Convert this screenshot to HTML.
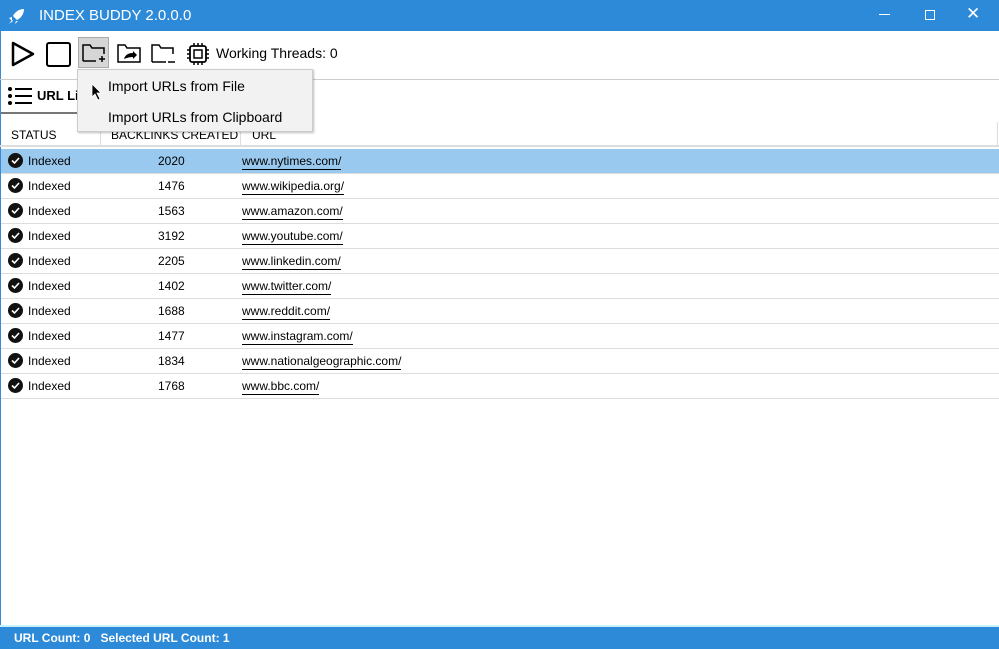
<!DOCTYPE html><html><head><style>
body{margin:0;width:999px;height:649px;position:relative;overflow:hidden;background:#fff;font-family:"Segoe UI","Liberation Sans",sans-serif;font-size:12px;color:#000}
.a{position:absolute}
.title{left:0;top:0;width:999px;height:31px;background:#2d8ad9;color:#fff;font-size:15px}
.row{position:absolute;left:1px;width:998px;height:24px;border-bottom:1px solid #ddd}
.row span{position:absolute;top:5px}
.u{border-bottom:1px solid #000;padding-bottom:1px}
.ck{left:7px;top:4px!important;width:15px;height:15px;border-radius:50%;background:#111}
</style></head><body>
<div class="a title">
<svg class="a" style="left:8px;top:7px" width="18" height="18" viewBox="0 0 18 18"><path d="M16 2C11 2 7 5 5 9l4 4c4-2 7-6 7-11z" fill="#fff"/><path d="M4 10l-3 1 3 3M8 14l-1 3 3-3M4 13l-3 4 4-3" fill="#fff"/></svg>
<span class="a" style="left:39px;top:7px">INDEX BUDDY 2.0.0.0</span>
<span class="a" style="left:879px;top:14px;width:11px;height:1px;background:#fff"></span>
<span class="a" style="left:925px;top:10px;width:8px;height:8px;border:1px solid #fff"></span>
<span class="a" style="left:966px;top:4px;font-size:17px">✕</span>
</div>
<div class="a" style="left:0;top:31px;width:1px;height:596px;background:#3a8ad8"></div>
<svg class="a" style="left:10px;top:41px" width="26" height="26"><path d="M3 2L23 13 3 24Z" fill="none" stroke="#000" stroke-width="2.5" stroke-linejoin="round"/></svg>
<div class="a" style="left:46px;top:42px;width:21px;height:21px;border:2.5px solid #000;border-radius:3px"></div>
<div class="a" style="left:78px;top:37px;width:31px;height:31px;background:#d6d6d6;border:1px solid #aaa;box-sizing:border-box"></div>
<svg class="a" style="left:81px;top:41px" width="26" height="24"><path d="M2 20V4h7l2 3h12v6M2 20h13" fill="none" stroke="#000" stroke-width="1.5"/><path d="M18 18h6M21 15v6" stroke="#000" stroke-width="1.5"/></svg>
<svg class="a" style="left:116px;top:42px" width="26" height="22"><path d="M2 20V3h7l2 3h13v14z" fill="none" stroke="#000" stroke-width="1.5"/><path d="M8 17c1-4 4-6 9-6v-2l4 4-4 4v-2c-4 0-6 1-9 2z" fill="#000"/></svg>
<svg class="a" style="left:150px;top:42px" width="28" height="24"><path d="M2 20V3h7l2 3h12v6M2 20h14" fill="none" stroke="#000" stroke-width="1.5"/><path d="M18 20h7" stroke="#000" stroke-width="1.5"/></svg>
<svg class="a" style="left:186px;top:42px" width="24" height="24"><rect x="4" y="4" width="16" height="16" rx="2" fill="none" stroke="#000" stroke-width="1.8"/><rect x="8" y="8" width="8" height="8" fill="none" stroke="#000" stroke-width="1.5"/><path d="M8 1v3M12 1v3M16 1v3M8 20v3M12 20v3M16 20v3M1 8h3M1 12h3M1 16h3M20 8h3M20 12h3M20 16h3" stroke="#000" stroke-width="1.5"/></svg>
<span class="a" style="left:216px;top:45px;font-size:14px">Working Threads: 0</span>
<div class="a" style="left:0;top:79px;width:999px;height:1px;background:#ccc"></div>
<svg class="a" style="left:7px;top:86px" width="26" height="20"><g fill="#000"><circle cx="3" cy="3" r="2"/><circle cx="3" cy="10" r="2"/><circle cx="3" cy="17" r="2"/><rect x="8" y="2" width="17" height="2"/><rect x="8" y="9" width="17" height="2"/><rect x="8" y="16" width="17" height="2"/></g></svg>
<span class="a" style="left:37px;top:88px;font-weight:bold;font-size:13px">URL Lis</span>
<div class="a" style="left:1px;top:112px;width:80px;height:2px;background:#777"></div>
<div class="a" style="left:0;top:122px;width:999px;height:25px;border-bottom:2px solid #ddd;box-sizing:border-box"></div>
<div class="a" style="left:100px;top:122px;width:1px;height:24px;background:#ddd"></div>
<div class="a" style="left:240px;top:122px;width:1px;height:24px;background:#ddd"></div>
<div class="a" style="left:997px;top:122px;width:1px;height:24px;background:#ddd"></div>
<span class="a" style="left:11px;top:128px">STATUS</span>
<span class="a" style="left:111px;top:128px">BACKLINKS CREATED</span>
<span class="a" style="left:252px;top:128px">URL</span>
<div id="rows"></div>
<div class="a" style="left:77px;top:69px;width:234px;height:61px;background:#f2f2f2;border:1px solid #ccc;box-shadow:1px 1px 2px rgba(0,0,0,.25);font-size:14px">
<span class="a" style="left:30px;top:8px">Import URLs from File</span>
<span class="a" style="left:30px;top:39px">Import URLs from Clipboard</span>
<svg class="a" style="left:13px;top:13px" width="12" height="18"><path d="M1 1v13l3-3 3 6 2-1-3-6h4z" fill="#000" stroke="#fff" stroke-width=".8"/></svg>
</div>
<div class="a" style="left:0;top:625px;width:999px;height:2px;background:#c8f2fb"></div>
<div class="a" style="left:0;top:627px;width:999px;height:22px;background:#2d8ad9;color:#fff;font-weight:bold">
<span class="a" style="left:14px;top:4px">URL Count: 0&nbsp;&nbsp;&nbsp;Selected URL Count: 1</span></div>
<script>
var d=[["2020","nytimes"],["1476","wikipedia.org"],["1563","amazon"],["3192","youtube"],["2205","linkedin"],["1402","twitter"],["1688","reddit"],["1477","instagram"],["1834","nationalgeographic"],["1768","bbc"]],h="";
d.forEach(function(r,i){var u=r[1].indexOf(".")>0?r[1]:r[1]+".com";h+='<div class="row" style="top:'+(149+25*i)+'px;'+(i==0?'background:#99c9ef':'')+'"><span class="ck"><svg width="15" height="15"><path d="M4 7.5l2.5 2.5 4.5-5" fill="none" stroke="#fff" stroke-width="1.6"/></svg></span><span style="left:27px">Indexed</span><span style="left:157px">'+r[0]+'</span><span class="u" style="left:241px">www.'+u+'/</span></div>'});
document.getElementById("rows").innerHTML=h;
</script>
</body></html>
